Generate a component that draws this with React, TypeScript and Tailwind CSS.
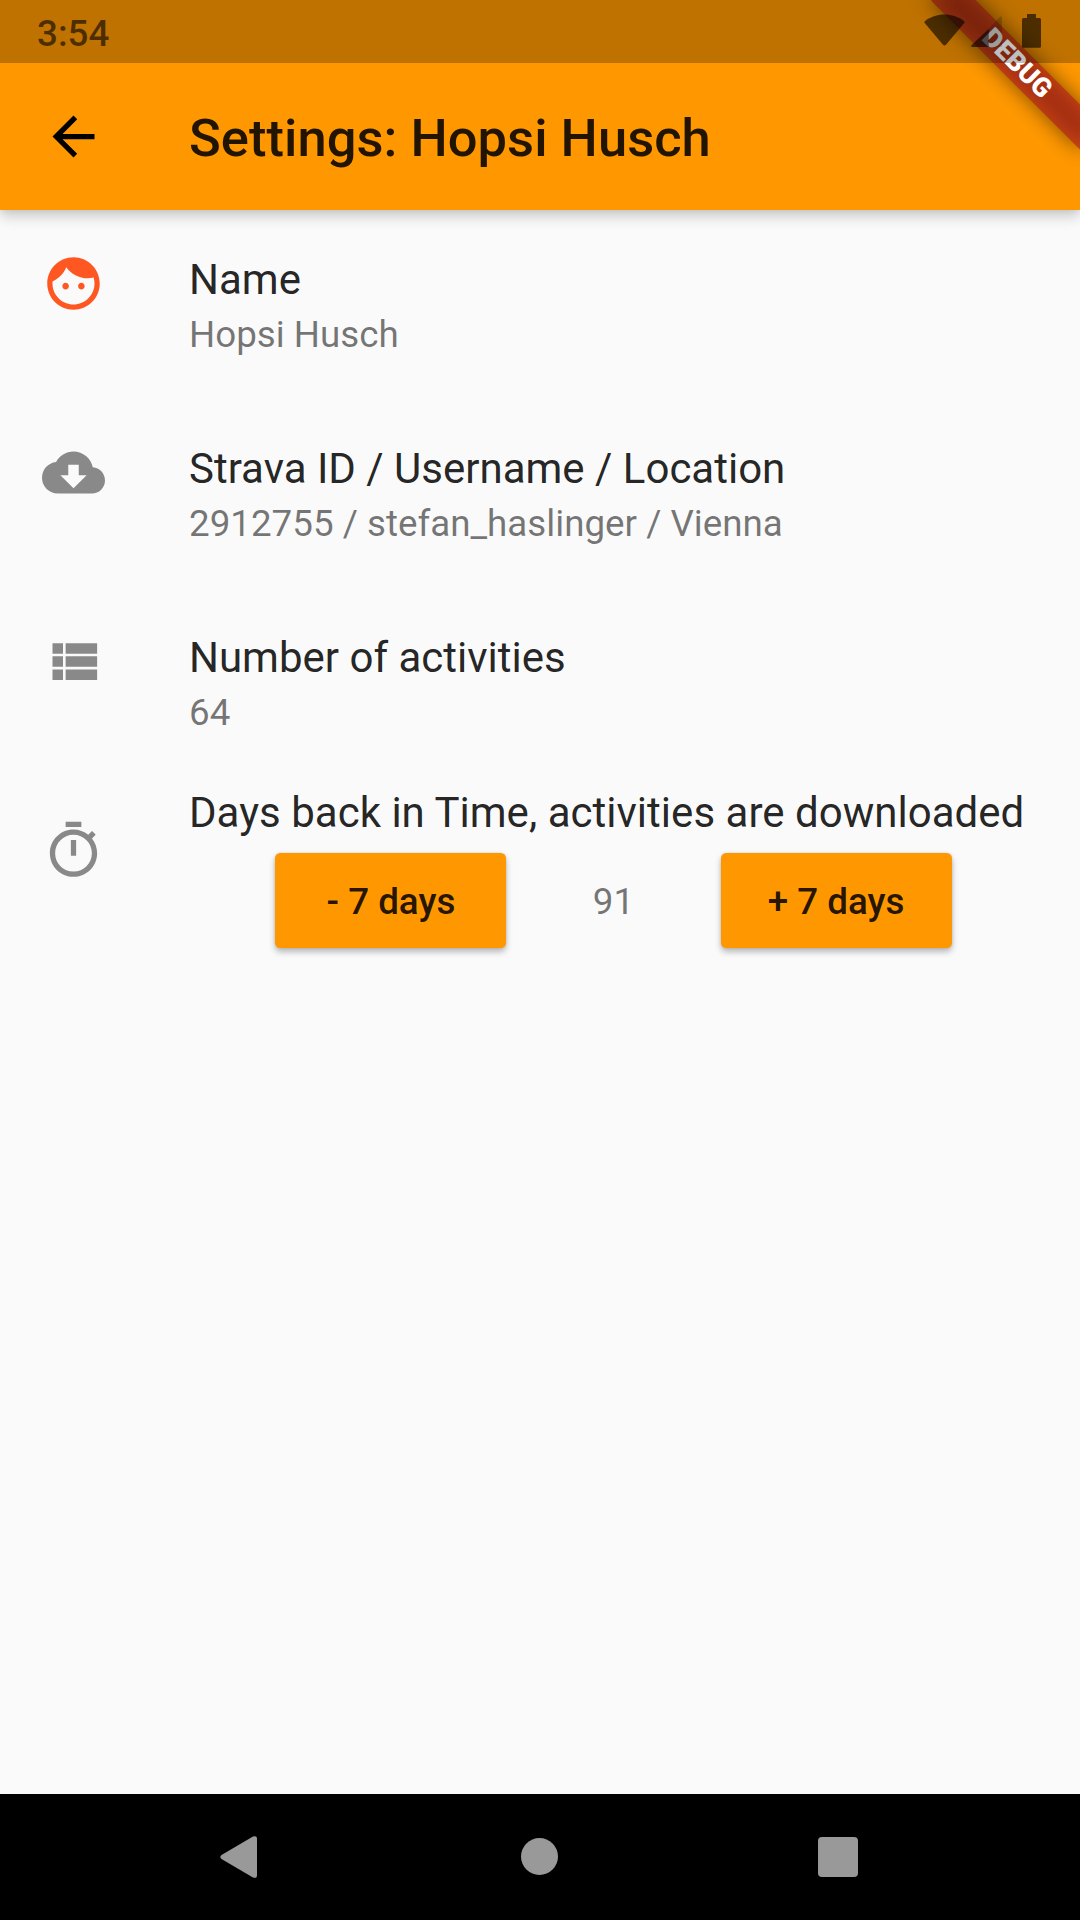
import type { ReactNode } from "react";

const ICONS = {
  back: "M20 11H7.83l5.59-5.59L12 4l-8 8 8 8 1.41-1.41L7.83 13H20v-2z",
  face: "M9 11.75c-.69 0-1.25.56-1.25 1.25s.56 1.25 1.25 1.25 1.25-.56 1.25-1.25-.56-1.25-1.25-1.25zm6 0c-.69 0-1.25.56-1.25 1.25s.56 1.25 1.25 1.25 1.25-.56 1.25-1.25-.56-1.25-1.25-1.25zM12 2C6.48 2 2 6.48 2 12s4.48 10 10 10 10-4.48 10-10S17.52 2 12 2zm0 18c-4.41 0-8-3.59-8-8 0-.29.02-.58.05-.86 2.36-1.05 4.23-2.98 5.21-5.37C11.07 8.33 14.05 10 17.42 10c.78 0 1.53-.09 2.25-.26.21.71.33 1.47.33 2.26 0 4.41-3.59 8-8 8z",
  cloud: "M19.35 10.04C18.67 6.59 15.64 4 12 4 9.11 4 6.6 5.64 5.35 8.04 2.34 8.36 0 10.91 0 14c0 3.31 2.69 6 6 6h13c2.76 0 5-2.24 5-5 0-2.64-2.05-4.78-4.65-4.96zM17 13l-5 5-5-5h3V9h4v4h3z",
  list: "M4 14h4v-4H4v4zm0 5h4v-4H4v4zM4 9h4V5H4v4zm5 5h12v-4H9v4zm0 5h12v-4H9v4zM9 5v4h12V5H9z",
  timer: "M15 1H9v2h6V1zm-4 13h2V8h-2v6zm8.03-6.61l1.42-1.42c-.43-.51-.9-.99-1.41-1.41l-1.42 1.42C16.07 4.74 14.12 4 12 4c-4.97 0-9 4.03-9 9s4.02 9 9 9 9-4.03 9-9c0-2.12-.74-4.07-1.97-5.61zM12 20c-3.87 0-7-3.13-7-7s3.13-7 7-7 7 3.13 7 7-3.13 7-7 7z",
};

function Icon({ name, className }: { name: keyof typeof ICONS; className: string }) {
  return (
    <svg viewBox="0 0 24 24" fill="currentColor" className={`size-[63px] shrink-0 ${className}`}>
      <path d={ICONS[name]} />
    </svg>
  );
}

function ListTile({ icon, title, children }: { icon: ReactNode; title: string; children: ReactNode }) {
  return (
    <li className="flex h-[189px] gap-[84px] px-[42px] pt-[42px]">
      {icon}
      <div className="flex flex-col pt-[3px]">
        <h2 className="text-[42px] leading-[50px] text-black/87">{title}</h2>
        <p className="mt-2 text-[36.75px] leading-[44px] text-black/54">{children}</p>
      </div>
    </li>
  );
}

function DaysButton({ children }: { children: ReactNode }) {
  return (
    <button className="h-[94.5px] w-[231px] rounded-[5.25px] bg-[#ff9800] pt-[2px] text-[36.75px] font-medium text-black/87 shadow-[0_4px_6px_rgba(0,0,0,0.26),0_0_3px_rgba(0,0,0,0.12)]">
      {children}
    </button>
  );
}

function DebugBanner() {
  return (
    <div className="pointer-events-none absolute top-0 right-0 size-[210px] overflow-hidden">
      <div className="absolute top-[73.5px] left-[105px] h-[31.5px] w-[210px] origin-[105px_-73.5px] rotate-45">
        <div className="absolute inset-0 bg-black/50 blur-[10.4px]" />
        <div className="absolute inset-0 flex items-center justify-center bg-[#b71c1c]/63 text-[26.775px] leading-none font-black text-white">
          DEBUG
        </div>
      </div>
    </div>
  );
}

function StatusBar() {
  return (
    <div className="absolute inset-x-0 top-0 flex h-[63px] items-start justify-between bg-black/25 pr-[39px] pl-[37px] text-black/60">
      <span className="mt-[12px] text-[36.75px] leading-[44px] font-medium">3:54</span>
      <div className="flex items-start pt-[14px]">
        <svg viewBox="0 0 41 32" fill="currentColor" className="h-8 w-[41px]">
          <path d="M.9 7.2C6.3 3 13.2.6 20.5.6S34.700 3 40.100 7.200Q41 8 40.300 9L22 30.700Q20.500 32.200 19 30.700L.7 9Q0 8 .9 7.200Z" />
        </svg>
        <svg viewBox="0 0 31 31" fill="currentColor" className="mt-[2px] ml-[6px] size-[31px]">
          <path d="M31 1.500V29.500Q31 31 29.500 31H17.800V12.800L28.700 1.100Q30.500-.6 31 1.500Z" opacity=".3" />
          <path d="M17.800 12.800V31H1.500Q-.8 30.800.7 29Z" />
        </svg>
        <svg viewBox="0 0 19 34" fill="currentColor" className="ml-5 h-[34px] w-[19px]">
          <path d="M5 0h9v4h3.500Q19 4 19 5.500v26.800q0 1.500-1.500 1.500h-16Q0 33.800 0 32.300V5.500Q0 4 1.500 4H5z" />
        </svg>
      </div>
    </div>
  );
}

export default function App() {
  return (
    <div className="relative flex h-[1920px] w-[1080px] flex-col overflow-hidden bg-[#fafafa] font-[Roboto,sans-serif]">
      <header className="flex h-[210px] shrink-0 items-center gap-[84px] bg-[#ff9800] px-[42px] pt-[63px] shadow-[0_6px_13px_rgba(0,0,0,0.2),0_0_6px_rgba(0,0,0,0.08)]">
        <Icon name="back" className="text-black" />
        <h1 className="mt-[2px] text-[52.5px] leading-[62px] font-medium tracking-[0.03px] text-black/87">
          Settings: Hopsi Husch
        </h1>
      </header>

      <main className="grow">
        <ul>
          <ListTile icon={<Icon name="face" className="text-[#ff5722]" />} title="Name">
            Hopsi Husch
          </ListTile>
          <ListTile icon={<Icon name="cloud" className="text-black/45" />} title="Strava ID / Username / Location">
            2912755 / stefan_haslinger / Vienna
          </ListTile>
          <ListTile icon={<Icon name="list" className="text-black/45" />} title="Number of activities">
            64
          </ListTile>
          <li className="flex h-[189px] gap-[84px] px-[42px]">
            <Icon name="timer" className="mt-[42px] text-black/45" />
            <div className="min-w-0 grow pt-[11px]">
              <h2 className="text-[42px] leading-[50px] tracking-[0.02px] whitespace-nowrap text-black/87">
                Days back in Time, activities are downloaded
              </h2>
              <div className="mt-[15px] flex items-center justify-evenly">
                <DaysButton>- 7 days</DaysButton>
                <span className="pt-1 text-[36.75px] leading-[44px] text-black/54">91</span>
                <DaysButton>+ 7 days</DaysButton>
              </div>
            </div>
          </li>
        </ul>
      </main>

      <nav className="flex h-[126px] shrink-0 items-center bg-black pl-[220px] text-[#999999]">
        <svg viewBox="0 0 37 42" fill="currentColor" className="h-[42px] w-[37px]">
          <path d="M33 .6Q37-1 37 3V39Q37 43 33 41.400L1.500 23Q-.8 21 1.500 19Z" />
        </svg>
        <div className="mb-px ml-[264px] size-[37px] rounded-full bg-[#999999]" />
        <div className="ml-[260px] size-10 rounded-[4px] bg-[#999999]" />
      </nav>

      <DebugBanner />
      <StatusBar />
    </div>
  );
}
